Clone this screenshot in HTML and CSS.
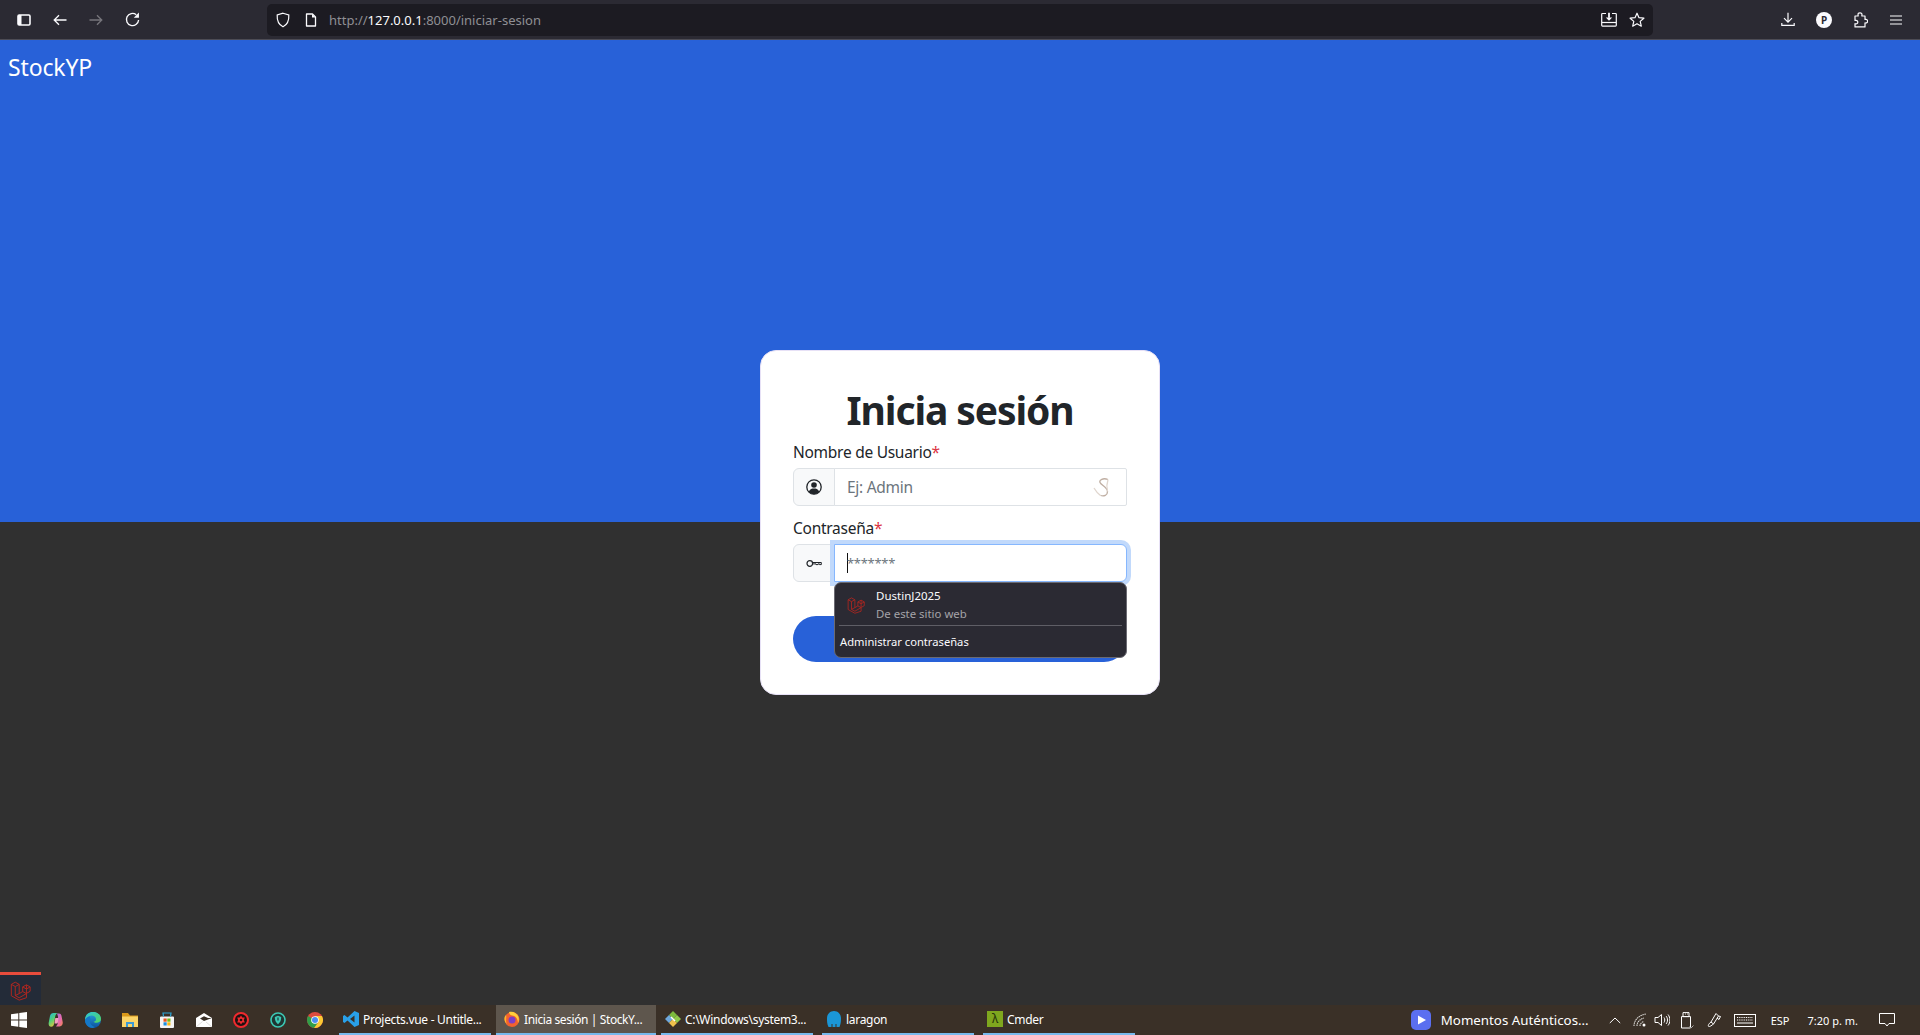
FILE: index.html
```html
<!DOCTYPE html>
<html lang="es">
<head>
<meta charset="utf-8">
<title>Inicia sesión | StockYP</title>
<link rel="stylesheet" href="styles.css">
</head>
<body>
<svg class="defs" width="0" height="0" aria-hidden="true">
  <symbol id="laravel" viewBox="0 0 24 24">
    <path d="M1.500 5 6 2.500 10.500 5v10.500l4-2.300V7.900l4.300-2.400 4.200 2.400v5l-4.200 2.400v5L10.500 23 1.500 18z M1.500 5 6 7.500 10.500 5 M6 7.500v10.300l4.500 2.500 8.300-4.800 M6 17.800l4.500-2.300 M14.500 7.900l4.300 2.400 4.200-2.400 M18.800 10.300v5 M14.500 13.200l4.300 2.300 M18.800 5.500v4.800" fill="none" stroke="currentColor" stroke-width="1.100" stroke-linejoin="round"/>
  </symbol>
</svg>

<header class="toolbar">
  <svg class="ico ico-sidebar" viewBox="0 0 14 12"><rect x="1" y="1" width="12" height="10" rx="1.200" fill="none" stroke="#fbfbfe" stroke-width="1.600"/><rect x="1" y="1" width="3.500" height="10" fill="#fbfbfe"/></svg>
  <svg class="ico ico-back" viewBox="0 0 14 12"><path d="M13.500 6H1.500M6 1.200 1.200 6 6 10.800" fill="none" stroke="#fbfbfe" stroke-width="1.300"/></svg>
  <svg class="ico ico-forward" viewBox="0 0 14 12"><path d="M.5 6h12M8 1.200 12.800 6 8 10.800" fill="none" stroke="#77767c" stroke-width="1.300"/></svg>
  <svg class="ico ico-reload" viewBox="0 0 14 14"><path d="M12.700 7.500A5.700 5.700 0 1 1 10.500 2.500" fill="none" stroke="#fbfbfe" stroke-width="1.300"/><path d="M13 .5V5.300H8.200z" fill="#fbfbfe"/></svg>
  <div class="urlbar">
    <svg class="ico ico-shield" viewBox="0 0 14 16"><path d="M7 1.200 12.800 3c.3 5-1.200 9.500-5.800 11.800C2.400 12.500.9 8 1.200 3z" fill="none" stroke="#fbfbfe" stroke-width="1.200"/></svg>
    <svg class="ico ico-file" viewBox="0 0 12 14"><path d="M1.500 1h6l3 3v9h-9z" fill="none" stroke="#fbfbfe" stroke-width="1.300" stroke-linejoin="round"/><path d="M7 1v3.500h3.500z" fill="#fbfbfe"/></svg>
    <div class="url"><span class="url-dim">http://</span><span class="url-host">127.0.0.1</span><span class="url-dim">:8000/iniciar-sesion</span></div>
    <svg class="ico ico-install" viewBox="0 0 16 15"><path d="M5 1.500H1.500a.8.8 0 0 0-.8.8v11a.8.8 0 0 0 .8.8h13a.8.8 0 0 0 .8-.8v-11a.8.8 0 0 0-.8-.8H11" fill="none" stroke="#fbfbfe" stroke-width="1.200"/><path d="M1 10.500h14" stroke="#fbfbfe" stroke-width="1.200"/><path d="M8 .8v5" stroke="#fbfbfe" stroke-width="1.800"/><path d="M4.800 5.500h6.400L8 8.800z" fill="#fbfbfe"/></svg>
    <svg class="ico ico-star" viewBox="0 0 16 16"><path d="m8 1.200 2 4.500 4.900.5-3.700 3.200 1.100 4.800L8 11.700l-4.300 2.500 1.100-4.800L1.100 6.200 6 5.700z" fill="none" stroke="#fbfbfe" stroke-width="1.200" stroke-linejoin="round"/></svg>
  </div>
  <svg class="ico ico-download" viewBox="0 0 14 15"><path d="M7 .8v9.200M3 6.200 7 10.200l4-4M.8 11v2.300h12.400V11" fill="none" stroke="#fbfbfe" stroke-width="1.200"/></svg>
  <div class="avatar">P</div>
  <svg class="ico ico-puzzle" viewBox="0 0 14 16"><path d="M1 4h3.200C3.500 1 5 .8 6 .8S8.500 1.500 7.800 4H11v3.500c2.200-.5 2.600.8 2.600 1.700s-.6 2.100-2.600 1.700v4H1v-3.200c2 .7 2.800-.5 2.800-1.500S3 7.800 1 8.500z" fill="none" stroke="#fbfbfe" stroke-width="1.200" stroke-linejoin="round"/></svg>
  <svg class="ico ico-menu" viewBox="0 0 12 10"><path d="M0 1h12M0 5h12M0 9h12" stroke="#fbfbfe" stroke-width="1.200"/></svg>
</header>

<main class="page">
  <div class="brand">StockYP</div>
  <section class="card">
    <h1 class="title">Inicia sesión</h1>
    <label class="label">Nombre de Usuario<span class="req">*</span></label>
    <div class="group">
      <span class="addon">
        <svg class="ico-field" viewBox="0 0 16 16"><circle cx="8" cy="8" r="7.200" fill="none" stroke="#212529" stroke-width="1.300"/><circle cx="8" cy="6" r="2.800" fill="#212529"/><path d="M2.800 12.500C4 10 6 9.500 8 9.500s4 .5 5.200 3C12 14.300 10 15.200 8 15.200s-4-.9-5.200-2.700z" fill="#212529"/></svg>
      </span>
      <div class="field">
        <span class="placeholder">Ej: Admin</span>
        <svg class="ext-icon" viewBox="0 0 18 20"><path d="M15 2.500C10 .5 6 3 7 5.500s7.500 5 7.500 9-3.500 5-7 4" fill="none" stroke="#bfaea2" stroke-width="1.300"/><path d="M15 2.500c-1 3-2 6-.5 12M1 11c2 3.500 4.500 6 6.500 7.500" fill="none" stroke="#e0d6ce" stroke-width="1.300"/></svg>
      </div>
    </div>
    <label class="label label-pass">Contraseña<span class="req">*</span></label>
    <div class="group">
      <span class="addon">
        <svg class="ico-key" viewBox="0 0 16 9"><circle cx="3.800" cy="4.500" r="2.800" fill="none" stroke="#212529" stroke-width="1.200"/><path d="M6.600 3.500H15.300V5.600H13.500V4.900H12V5.600H10V4.900H6.600" fill="none" stroke="#212529" stroke-width="1"/></svg>
      </span>
      <div class="field field-focus">
        <span class="caret"></span><span class="stars">*******</span>
      </div>
      <div class="popup">
        <div class="popup-item">
          <svg class="popup-logo"><use href="#laravel"/></svg>
          <div class="popup-text">
            <div class="popup-name">DustinJ2025</div>
            <div class="popup-sub">De este sitio web</div>
          </div>
        </div>
        <div class="popup-manage">Administrar contraseñas</div>
      </div>
    </div>
    <button class="submit" type="button" aria-label="Iniciar sesión"></button>
  </section>
  <div class="debugbar"><svg class="debug-logo"><use href="#laravel"/></svg></div>
</main>

<footer class="taskbar">
  <div class="launcher">
    <span class="cell"><svg class="tb-ico" viewBox="0 0 16 16"><path d="M0 2.300 7.300 1.300V7.500H0zM8.300 1.100 16 0V7.500H8.300zM0 8.500H7.300V14.700L0 13.700zM8.300 8.500H16V16L8.300 14.900z" fill="#fff"/></svg></span>
    <span class="cell"><svg class="tb-ico" viewBox="0 0 16 16"><defs><linearGradient id="copA" x1="0" y1="0" x2=".6" y2="1"><stop offset="0" stop-color="#25b3e0"/><stop offset=".5" stop-color="#4fd07a"/><stop offset="1" stop-color="#f3c63a"/></linearGradient><linearGradient id="copB" x1="0" y1="0" x2="1" y2="1"><stop offset="0" stop-color="#9c6ce0"/><stop offset=".55" stop-color="#ea6cb0"/><stop offset="1" stop-color="#f2854a"/></linearGradient></defs><path d="M9 1.500h2c1.500 0 2 .8 2.400 2l1.300 6.500c.4 2-.7 4.500-3 4.500H8l2-3V4.500z" fill="url(#copB)"/><path d="M5.500 1H10C8 1.500 7.500 3 7.200 4.500L6 12c-.3 1.500-1.200 3-3 2.800-1.500-.2-2.700-1.800-2.300-4L2 4c.4-2 1.700-3 3.500-3z" fill="url(#copA)"/><path d="M7.300 6h3.200l-.8 5.500H6.500z" fill="#f3a0c0"/></svg></span>
    <span class="cell"><svg class="tb-ico" viewBox="0 0 16 16"><defs><linearGradient id="edg" x1="0" y1="0" x2="0" y2="1"><stop offset="0" stop-color="#2aa8e0"/><stop offset="1" stop-color="#0c4f9c"/></linearGradient><linearGradient id="edgB" x1="0" y1="0" x2="1" y2="1"><stop offset="0" stop-color="#2fc4d8"/><stop offset="1" stop-color="#52d65c"/></linearGradient></defs><circle cx="8" cy="8" r="8" fill="url(#edg)"/><path d="M8 0c4.500 0 8 3 8 7 0 2.500-2.300 3.800-4.500 3.800-1.500 0-2.500-.5-3-1 1.500-.1 2.500-1 2.500-2.300C11 5 9 3.500 6.800 3.500 4 3.500 1 6 0 8 0 3 3.500 0 8 0z" fill="url(#edgB)"/><path d="M5.500 7.500c-1.500 3 .5 6.500 4.500 7.500-1 .6-2 1-2.500 1C3 16 0 12 0 8c1-2 3-3.500 5-3.500C4.500 5.500 5.500 6.500 5.500 7.500z" fill="#1478c8"/></svg></span>
    <span class="cell"><svg class="tb-ico" viewBox="0 0 16 16"><path d="M0 1h6l2 2.500h8V15H0z" fill="#d9981a"/><path d="M0 4.500h16V15H0z" fill="#fbd468"/><path d="M4 10h8v5h-2v-3H6v3H4z" fill="#3c9ad6"/></svg></span>
    <span class="cell"><svg class="tb-ico" viewBox="0 0 16 16"><path d="M2 4.500h12a1 1 0 0 1 1 1V15a1 1 0 0 1-1 1H2a1 1 0 0 1-1-1V5.500a1 1 0 0 1 1-1z" fill="#f4f4f4"/><path d="M4.500 4.500 4 1h8l-.5 3.500" fill="none" stroke="#2ba5d8" stroke-width="1.200"/><rect x="4.500" y="6.500" width="3.200" height="3.200" fill="#e9541f"/><rect x="8.300" y="6.500" width="3.200" height="3.200" fill="#74b816"/><rect x="4.500" y="10.300" width="3.200" height="3.200" fill="#1c8fe0"/><rect x="8.300" y="10.300" width="3.200" height="3.200" fill="#f8b712"/></svg></span>
    <span class="cell"><svg class="tb-ico" viewBox="0 0 16 16"><path d="M0 6 8 1l8 5-4 0-4-1.800L4 6.500 8 9l8-3v9H0z" fill="#fff"/><path d="M0 15 6.500 9.500M16 15 10 10" stroke="#c9c7c4" stroke-width=".6"/></svg></span>
    <span class="cell"><svg class="tb-ico" viewBox="0 0 16 16"><circle cx="8" cy="8" r="7" fill="#1d1212" stroke="#ef2a2e" stroke-width="2"/><path d="M8 3.500 9.300 5.500 11.800 5.500 10.800 8 11.800 10.500H9.300L8 12.500 6.700 10.500H4.200L5.200 8 4.200 5.500H6.700z" fill="#ef2a2e"/><circle cx="8" cy="8" r="1.300" fill="#1d1212"/></svg></span>
    <span class="cell"><svg class="tb-ico" viewBox="0 0 16 16"><circle cx="8" cy="8" r="7" fill="#1f3532" stroke="#3cc8b4" stroke-width="1.600"/><path d="M8 3.800 11.200 5c0 3-1 5.700-3.200 7.200C5.800 10.700 4.800 8 4.800 5z" fill="#3cc8b4"/><path d="M8 5.500v3" stroke="#1f3532" stroke-width="1.200"/></svg></span>
    <span class="cell"><svg class="tb-ico" viewBox="0 0 16 16"><circle cx="8" cy="8" r="8" fill="#dd4b3e"/><path d="M8 8 1.100 4a8 8 0 0 0 6 11.900L11.500 10z" fill="#2f9e48"/><path d="M8 4h6.900A8 8 0 0 1 7.100 15.900L11.500 10z" fill="#fcc933"/><circle cx="8" cy="8" r="3.800" fill="#fff"/><circle cx="8" cy="8" r="3" fill="#4a8ef0"/></svg></span>
  </div>

  <div class="task task-vs">
    <svg class="tb-ico" viewBox="0 0 16 16"><path d="M11.500 0 16 2v12l-4.500 2L4.500 9.500 1.500 12 0 11V5l1.500-1 3 2.500zM11.500 4.500 7 8l4.500 3.500z" fill="#29a0e8"/></svg>
    <span class="task-label">Projects.vue - Untitle...</span>
  </div>
  <div class="task task-active">
    <svg class="tb-ico" viewBox="0 0 16 16"><circle cx="8" cy="8.500" r="7.500" fill="#f2622e"/><path d="M2 4C3 7 1 10 3 13c-3-2-3.500-7-1-9z" fill="#ffb52c"/><path d="M5 1c4-1 8 1 9.500 5 .5 2 .5 4-.5 6 0-4-2-7-6-7.500C6 4 5 2.500 5 1z" fill="#ffcf3a"/><circle cx="8" cy="9" r="3.500" fill="#7b3fc7"/></svg>
    <span class="task-label task-label-tight">Inicia sesión | StockY...</span>
  </div>
  <div class="task task-git">
    <svg class="tb-ico" viewBox="0 0 16 16"><path d="M8 0 12 4 8 8 4 4z" fill="#7dbb3e"/><path d="M4 4 8 8 4 12 0 8z" fill="#6fa8dc"/><path d="M12 4 16 8 12 12 8 8z" fill="#8fc94a"/><path d="M8 8 12 12 8 16 4 12z" fill="#f0c14b"/><path d="M6 6 10 10" stroke="#fff" stroke-width="1.500"/></svg>
    <span class="task-label">C:\Windows\system3...</span>
  </div>
  <div class="task task-laragon">
    <svg class="tb-ico" viewBox="0 0 16 16"><path d="M8 0c4 0 7 3 7 7.500 0 3.500-.5 6-1.500 8.500h-3v-3h-1v3h-3v-3h-1v3h-3C1 13 1 10 1 7.500 1 3 4 0 8 0z" fill="#1b96d6"/></svg>
    <span class="task-label">laragon</span>
  </div>
  <div class="task task-cmder">
    <span class="cmder-box">λ</span>
    <span class="task-label">Cmder</span>
  </div>

  <div class="tray">
    <span class="media-tile"><svg viewBox="0 0 20 20" class="media-play"><path d="M7 5.500 15 10l-8 4.500z" fill="#fff"/></svg></span>
    <span class="media-text">Momentos Auténticos...</span>
    <svg class="tray-ico tray-caret" viewBox="0 0 12 7"><path d="M.8 6 6 1l5.200 5" fill="none" stroke="#fff" stroke-width="1"/></svg>
    <svg class="tray-ico tray-wifi" viewBox="0 0 14 14"><path d="M1 13C1 7 6 2 13 1M4 13c0-4 3-7 7-8M7 13c0-2 1.500-4 4-4.500" fill="none" stroke="#d8d6d3" stroke-width="1.100" stroke-dasharray="1.500 .6"/><circle cx="11" cy="12" r="1.500" fill="#fff"/></svg>
    <svg class="tray-ico tray-vol" viewBox="0 0 16 14"><path d="M1 4.500h3L7.500 1.500v11L4 9.500H1z" fill="none" stroke="#fff" stroke-width="1"/><path d="M10 4.500c1 1.500 1 3.500 0 5M12 3c2 2 2 6 0 8M14 1.500c2.500 3 2.500 8 0 11" fill="none" stroke="#fff" stroke-width="1"/></svg>
    <svg class="tray-ico tray-usb" viewBox="0 0 14 17"><path d="M3 .6h6v4H3zM1.500 4.600h9V16h-9z" fill="none" stroke="#fff" stroke-width="1"/><path d="M5 2h.8M7 2h.8" stroke="#fff"/><path d="m9.500 14.500 1.500 1.500 2.500-2.500" fill="none" stroke="#aaa" stroke-width="1"/></svg>
    <svg class="tray-ico tray-pen" viewBox="0 0 16 16"><path d="M9 1.500 11.500 4 6.500 12 4 10z M11.500 4l2 .5-1.500 3L10 6 M4 10c-3 2-3.500 5-1.500 4.500S6 12 6.500 12" fill="none" stroke="#fff" stroke-width="1"/></svg>
    <svg class="tray-ico tray-kbd" viewBox="0 0 22 13"><rect x=".5" y=".5" width="21" height="12" fill="none" stroke="#fff"/><path d="M3 3.500h16M3 6h16" stroke="#fff" stroke-dasharray="1 .8"/><path d="M3 9h16" stroke="#fff"/></svg>
    <span class="tray-lang">ESP</span>
    <span class="tray-time">7:20 p. m.</span>
    <svg class="tray-ico tray-note" viewBox="0 0 16 14"><path d="M.5.5h15v10H10l-2 2.500-2-2.500H.5z" fill="none" stroke="#fff"/></svg>
  </div>
</footer>
</body>
</html>
```
FILE: styles.css
```css
* { box-sizing: border-box; }
html, body { height: 100%; margin: 0; }
body {
  display: flex;
  flex-direction: column;
  height: 1035px;
  overflow: hidden;
  font-family: "Noto Sans", "Open Sans", sans-serif;
  color: #212529;
  background: #303030;
}
.defs { position: absolute; }
.ico { display: block; flex: none; }

/* browser toolbar */
.toolbar {
  height: 40px;
  flex: none;
  display: flex;
  align-items: center;
  background: #2b2a33;
  border-bottom: 1px solid #4d4c55;
}
.ico-sidebar { width: 14px; height: 12px; margin-left: 17px; }
.ico-back { width: 14px; height: 12px; margin-left: 22px; }
.ico-forward { width: 14px; height: 12px; margin-left: 22px; }
.ico-reload { width: 15px; height: 15px; margin-left: 22px; }
.urlbar {
  width: 1386px;
  height: 32px;
  margin-left: 127px;
  display: flex;
  align-items: center;
  background: #1c1b22;
  border-radius: 5px;
}
.ico-shield { width: 14px; height: 16px; margin-left: 9px; }
.ico-file { width: 12px; height: 14px; margin-left: 15px; }
.url {
  margin-left: 12px;
  font-size: 13px;
  white-space: nowrap;
  flex: 1;
}
.url-dim { color: #8f8f94; }
.url-host { color: #fbfbfe; }
.ico-install { width: 16px; height: 15px; }
.ico-star { width: 16px; height: 16px; margin-left: 12px; margin-right: 8px; }
.ico-download { width: 14px; height: 15px; margin-left: 128px; }
.avatar {
  width: 16px;
  height: 16px;
  margin-left: 21px;
  border-radius: 50%;
  background: #fbfbfe;
  color: #2b2a33;
  font-size: 10px;
  font-weight: 700;
  line-height: 16px;
  text-align: center;
}
.ico-puzzle { width: 14px; height: 16px; margin-left: 22px; }
.ico-menu { width: 12px; height: 10px; margin-left: 22px; }

/* page */
.page {
  position: relative;
  flex: 1;
  display: flex;
  align-items: center;
  justify-content: center;
  background: linear-gradient(to bottom, #2861d8 0, #2861d8 482px, #303030 482px);
}
.brand {
  position: absolute;
  left: 8px;
  top: 10px;
  font-size: 23px;
  line-height: 34px;
  letter-spacing: -0.15px;
  color: #fff;
}
.card {
  width: 400px;
  height: 345px;
  padding: 35px 32px 33px;
  background: #fff;
  border: 1px solid #e7e1f6;
  border-radius: 16px;
}
.title {
  margin: 0 0 6px;
  font-size: 39px;
  line-height: 48px;
  font-weight: 700;
  letter-spacing: -1.1px;
  text-align: center;
}
.label {
  display: block;
  margin-bottom: 4px;
  font-size: 15.500px;
  line-height: 24px;
  letter-spacing: -0.27px;
}
.label-pass { margin-top: 10px; }
.req { color: #dc3545; }
.group {
  position: relative;
  display: flex;
  height: 38px;
}
.addon {
  width: 42px;
  flex: none;
  display: flex;
  align-items: center;
  justify-content: center;
  background: #f8f9fa;
  border: 1px solid #dee2e6;
  border-radius: 6px 0 0 6px;
}
.ico-field { width: 16px; height: 16px; display: block; }
.ico-key { width: 16px; height: 9px; display: block; }
.field {
  flex: 1;
  margin-left: -1px;
  display: flex;
  align-items: center;
  justify-content: space-between;
  padding: 0 15px 0 12px;
  background: #fff;
  border: 1px solid #dee2e6;
  border-radius: 0 2px 2px 0;
}
.field-focus {
  justify-content: flex-start;
  border-color: #86b7fe;
  border-radius: 0 6px 6px 0;
  box-shadow: 0 0 0 4px #c1d9fb;
}
.placeholder {
  font-size: 15.500px;
  letter-spacing: -0.27px;
  color: #6c757d;
}
.stars {
  font-size: 13px;
  line-height: 24px;
  letter-spacing: -0.3px;
  color: #6c757d;
}
.caret { width: 1px; height: 20px; background: #111; margin-right: -1px; }
.ext-icon { width: 18px; height: 20px; display: block; }
.popup {
  position: absolute;
  left: 41px;
  right: 0;
  top: 38px;
  height: 76px;
  background: #2b2a33;
  border: 1px solid #6b6a72;
  border-radius: 7px;
  color: #fbfbfe;
  z-index: 2;
}
.popup-item {
  display: flex;
  align-items: center;
  height: 43px;
  padding-top: 2px;
  margin: 0 4px;
  border-bottom: 1px solid #5f5e66;
}
.popup-logo { width: 18px; height: 18px; margin-left: 8px; color: #b3261f; flex: none; }
.popup-text { margin-left: 11px; }
.popup-name { font-size: 11.500px; line-height: 18px; }
.popup-sub { font-size: 11.400px; line-height: 18px; color: #a5a4a9; }
.popup-manage { font-size: 11.200px; line-height: 32px; padding-left: 5px; }
.submit {
  display: block;
  width: 100%;
  height: 46px;
  margin-top: 34px;
  padding: 0;
  border: 0;
  border-radius: 23px;
  background: #2861d8;
}
.debugbar {
  position: absolute;
  left: 0;
  bottom: 0;
  width: 41px;
  height: 33px;
  background: #232b38;
  border-top: 3px solid #e74c3c;
  display: flex;
  align-items: center;
  justify-content: center;
}
.debug-logo { width: 21px; height: 21px; color: #b3261f; }

/* taskbar */
.taskbar {
  height: 30px;
  flex: none;
  display: flex;
  background: #3a3027;
  color: #fff;
  font-size: 12px;
}
.launcher { display: flex; width: 339px; flex: none; }
.cell { width: 37px; display: flex; align-items: center; justify-content: center; }
.tb-ico { width: 16px; height: 16px; display: block; flex: none; }
.task {
  width: 152px;
  display: flex;
  align-items: center;
  padding-left: 4px;
  border-bottom: 2px solid #76b9ed;
  white-space: nowrap;
}
.task-label { margin-left: 4px; letter-spacing: -0.3px; }
.task-label-tight { letter-spacing: -0.4px; }
.task-active { width: 160px; margin-left: 5px; padding-left: 8px; background: #5e564d; }
.task-git { margin-left: 5px; }
.task-laragon { margin-left: 9px; }
.task-cmder { margin-left: 9px; }
.cmder-box {
  width: 16px;
  height: 16px;
  background: #7fa71e;
  color: #23300a;
  font-size: 12px;
  line-height: 16px;
  text-align: center;
}
.tray { display: flex; align-items: center; margin-left: auto; padding-right: 25px; }
.media-tile {
  width: 20px;
  height: 20px;
  border-radius: 5px;
  background: #5b6ff0;
  display: block;
}
.media-play { display: block; width: 20px; height: 20px; }
.media-text { margin-left: 10px; font-size: 13.300px; white-space: nowrap; }
.tray-ico { display: block; flex: none; }
.tray-caret { width: 12px; height: 7px; margin-left: 20px; }
.tray-wifi { width: 14px; height: 14px; margin-left: 12px; }
.tray-vol { width: 16px; height: 14px; margin-left: 7px; }
.tray-usb { width: 14px; height: 17px; margin-left: 10px; }
.tray-pen { width: 16px; height: 16px; margin-left: 13px; }
.tray-kbd { width: 22px; height: 13px; margin-left: 11px; }
.tray-lang { margin-left: 15px; font-size: 11px; }
.tray-time { margin-left: 18px; font-size: 11px; }
.tray-note { width: 16px; height: 14px; margin-left: 21px; }
```
